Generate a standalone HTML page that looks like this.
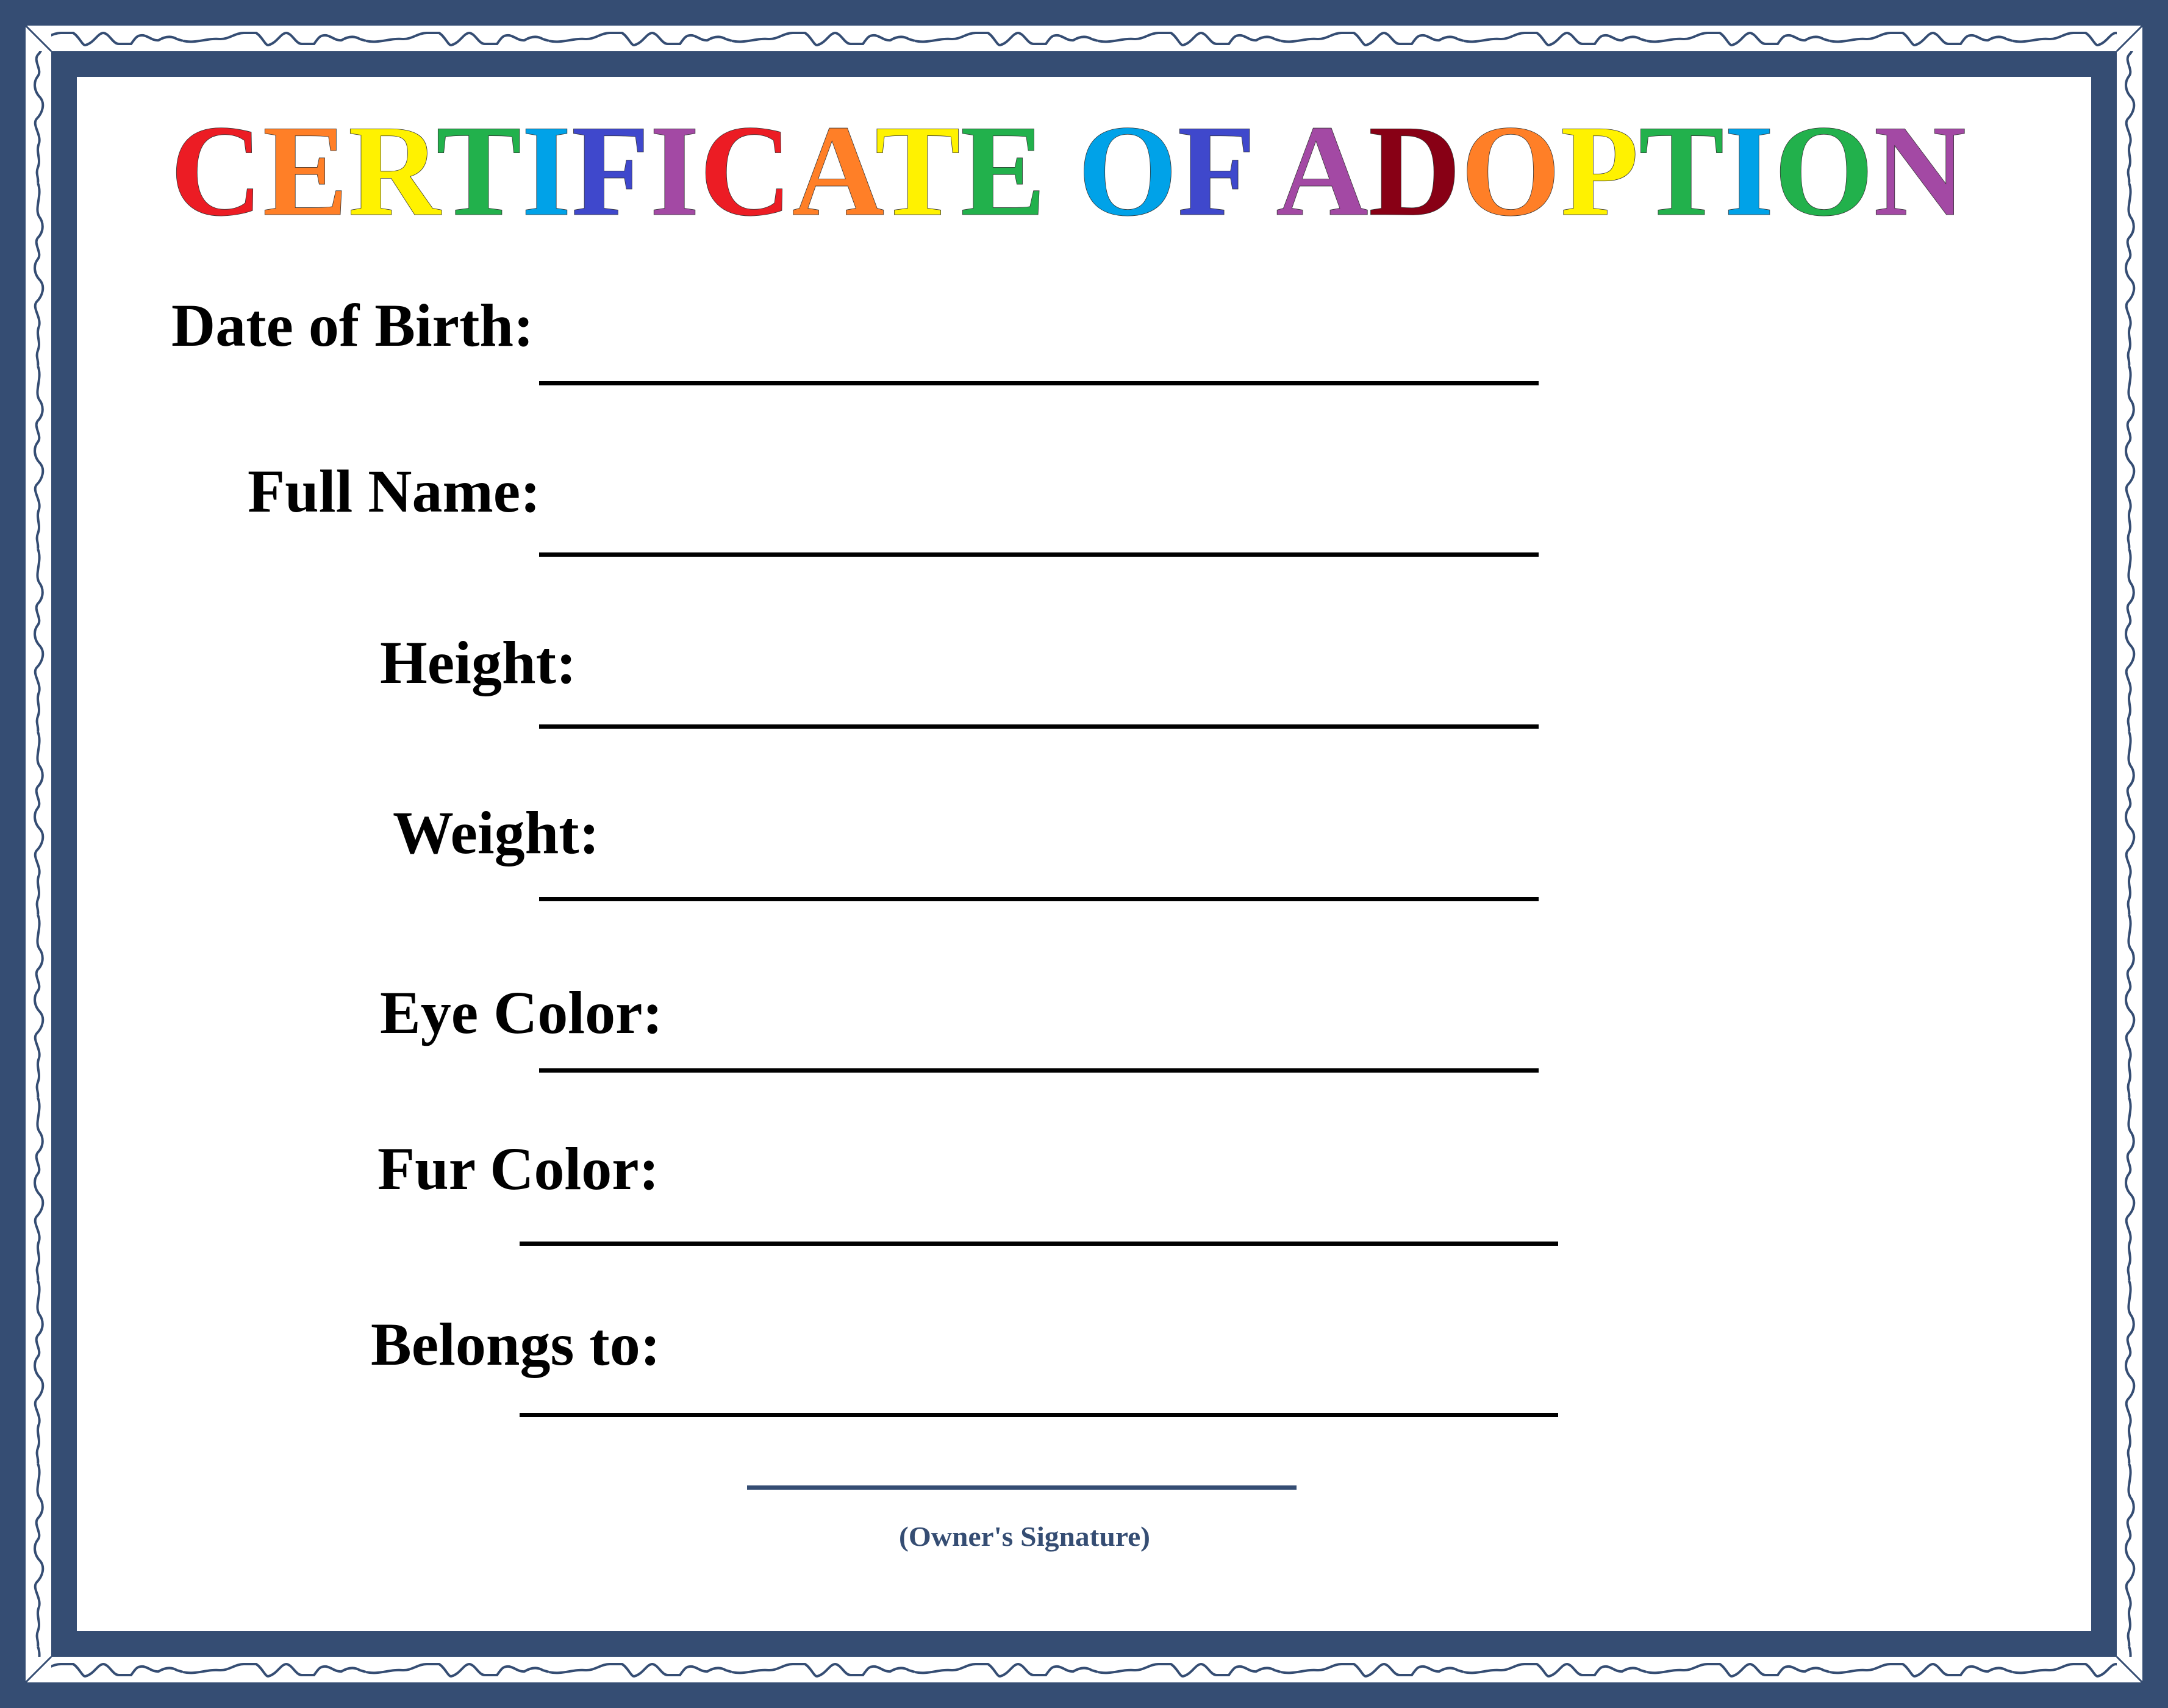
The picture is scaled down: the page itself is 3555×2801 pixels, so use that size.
<!DOCTYPE html>
<html><head><meta charset="utf-8"><style>
html,body{margin:0;padding:0;background:#fff}
svg{display:block}
</style></head><body>
<svg width="3555" height="2801" viewBox="0 0 3555 2801" xmlns="http://www.w3.org/2000/svg">
<defs>
<path id="hw" d="M0,25 C20,30 40,20 60,22 C75,23 85,12 100,12 L120,12 C130,18 135,33 140,32 C155,28 160,12 170,12 C180,14 185,30 195,30 L215,30 C222,20 225,15 235,16 C245,18 250,25 260,24 C270,18 280,16 290,22 L300,25" fill="none" stroke="#354d73" stroke-width="4"/>
<path id="vw" d="M20,0 C28,20 14,40 22,55 C30,65 30,80 20,90 C12,100 28,115 20,125 C12,135 14,150 24,160 C32,170 28,185 18,195 C10,205 26,220 22,235 C16,250 26,260 20,275 C16,285 22,292 20,300" fill="none" stroke="#354d73" stroke-width="4"/>
<pattern id="wt" x="0" y="42" width="300" height="42" patternUnits="userSpaceOnUse"><use href="#hw"/></pattern>
<pattern id="wb" x="0" y="2717" width="300" height="42" patternUnits="userSpaceOnUse"><use href="#hw"/></pattern>
<pattern id="wl" x="42" y="0" width="42" height="300" patternUnits="userSpaceOnUse"><use href="#vw"/></pattern>
<pattern id="wr" x="3471" y="0" width="42" height="300" patternUnits="userSpaceOnUse"><use href="#vw"/></pattern>
</defs>
<rect width="3555" height="2801" fill="#354d73"/>
<rect x="42" y="42" width="3471" height="2717" fill="#fff"/>
<rect x="84" y="42" width="3387" height="42" fill="url(#wt)"/>
<rect x="84" y="2717" width="3387" height="42" fill="url(#wb)"/>
<rect x="42" y="84" width="42" height="2633" fill="url(#wl)"/>
<rect x="3471" y="84" width="42" height="2633" fill="url(#wr)"/>
<rect x="84" y="84" width="3387" height="2633" fill="#354d73"/>
<path d="M42,42 L84,84 M3513,42 L3471,84 M42,2759 L84,2717 M3513,2759 L3471,2717" stroke="#354d73" stroke-width="3"/>
<rect x="126" y="126" width="3303" height="2549" fill="#fff"/>

<text x="279" y="352" font-family="Liberation Serif, serif" font-weight="bold" font-size="215" textLength="2945" lengthAdjust="spacingAndGlyphs" stroke="#333" stroke-width="0.8"><tspan fill="#ec1c24">C</tspan><tspan fill="#ff7f27">E</tspan><tspan fill="#fff200">R</tspan><tspan fill="#22b14c">T</tspan><tspan fill="#00a2e8">I</tspan><tspan fill="#3f48cc">F</tspan><tspan fill="#a349a4">I</tspan><tspan fill="#ec1c24">C</tspan><tspan fill="#ff7f27">A</tspan><tspan fill="#fff200">T</tspan><tspan fill="#22b14c">E</tspan> <tspan fill="#00a2e8">O</tspan><tspan fill="#3f48cc">F</tspan> <tspan fill="#a349a4">A</tspan><tspan fill="#880015">D</tspan><tspan fill="#ff7f27">O</tspan><tspan fill="#fff200">P</tspan><tspan fill="#22b14c">T</tspan><tspan fill="#00a2e8">I</tspan><tspan fill="#22b14c">O</tspan><tspan fill="#a349a4">N</tspan></text>

<g font-family="Liberation Serif, serif" font-weight="bold" font-size="100" fill="#000">
<text x="281" y="567">Date of Birth:</text>
<text x="406" y="839">Full Name:</text>
<text x="623" y="1120">Height:</text>
<text x="644" y="1399">Weight:</text>
<text x="623" y="1694">Eye Color:</text>
<text x="619" y="1950">Fur Color:</text>
<text x="608" y="2238">Belongs to:</text>
</g>
<g fill="#000">
<rect x="884" y="625" width="1639" height="7"/>
<rect x="884" y="906" width="1639" height="7"/>
<rect x="884" y="1188" width="1639" height="7"/>
<rect x="884" y="1471" width="1639" height="7"/>
<rect x="884" y="1752" width="1639" height="7"/>
<rect x="852" y="2036" width="1703" height="7"/>
<rect x="852" y="2317" width="1703" height="7"/>
</g>
<rect x="1225" y="2436" width="901" height="7" fill="#354d73"/>
<text x="1680" y="2535" text-anchor="middle" font-family="Liberation Serif, serif" font-weight="bold" font-size="46" fill="#354d73" textLength="412" lengthAdjust="spacingAndGlyphs">(Owner's Signature)</text>
</svg>
</body></html>
